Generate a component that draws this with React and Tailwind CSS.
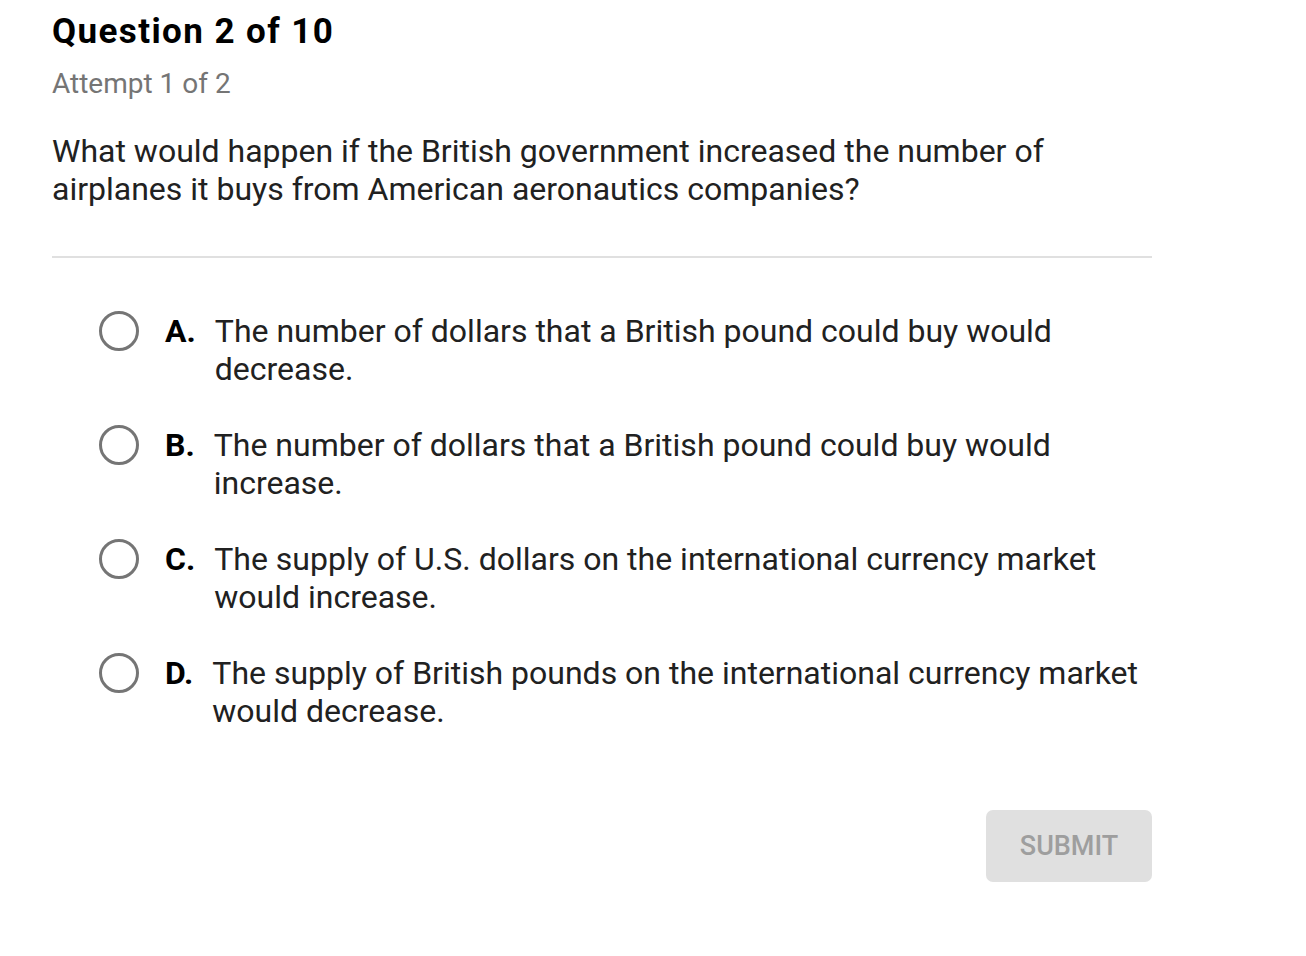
import React from "react";

const options = [
  { key: "A", text: "The number of dollars that a British pound could buy would decrease." },
  { key: "B", text: "The number of dollars that a British pound could buy would increase." },
  { key: "C", text: "The supply of U.S. dollars on the international currency market would increase." },
  { key: "D", text: "The supply of British pounds on the international currency market would decrease." },
];

export default function App() {
  return (
    <div className="min-h-screen bg-white pl-[52px] pt-[13px] font-['Roboto',sans-serif] text-[#212121]">
      <div className="w-[1100px]">
        {/* Header */}
        <h1 className="text-[35px] leading-[38px] font-bold tracking-[0.04em] text-black">
          Question 2 of 10
        </h1>
        <p className="mt-[17px] text-[28px] leading-[32px] text-[#757575]">
          Attempt 1 of 2
        </p>

        <p className="mt-[32px] text-[32px] leading-[38px] w-[1010px]">
          What would happen if the British government increased the number of airplanes it buys from American aeronautics companies?
        </p>

        <div className="mt-[48px] h-[2px] bg-[#e0e0e0]" />

        {/* Options */}
        <div className="mt-[54px] ml-[47px] flex flex-col gap-[38px]">
          {options.map((opt) => (
            <label key={opt.key} className="flex items-start cursor-pointer">
              <span className="mt-[-1px] w-10 h-10 shrink-0 rounded-full border-[3px] border-[#757575]" />
              <span className="ml-[26px] flex flex-1 text-[32px] leading-[38px]">
                <span className="font-bold text-black mr-[19px] shrink-0">{opt.key}.</span>
                <span className="flex-1">{opt.text}</span>
              </span>
            </label>
          ))}
        </div>

        <div className="mt-[80px] flex justify-end">
          <button className="w-[166px] h-[72px] rounded-[7px] bg-[#e0e0e0] text-[27px] font-medium text-[#9e9e9e]">
            SUBMIT
          </button>
        </div>
      </div>
    </div>
  );
}
